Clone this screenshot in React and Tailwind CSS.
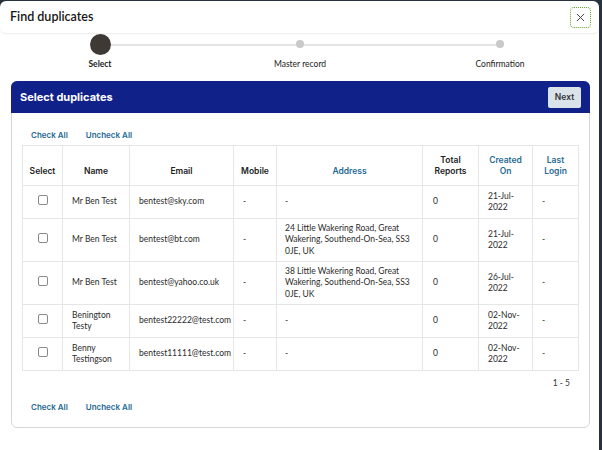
import React from 'react';

const rows = [
  { name: 'Mr Ben Test', email: 'bentest@sky.com', address: '-', created: '21-Jul-2022', h: 'h-[33px]' },
  {
    name: 'Mr Ben Test',
    email: 'bentest@bt.com',
    address: '24 Little Wakering Road, Great Wakering, Southend-On-Sea, SS3 0JE, UK',
    created: '21-Jul-2022',
    h: 'h-[43px]',
  },
  {
    name: 'Mr Ben Test',
    email: 'bentest@yahoo.co.uk',
    address: '38 Little Wakering Road, Great Wakering, Southend-On-Sea, SS3 0JE, UK',
    created: '26-Jul-2022',
    h: 'h-[43px]',
  },
  { name: 'Benington Testy', email: 'bentest22222@test.com', address: '-', created: '02-Nov-2022', h: 'h-[33px]' },
  { name: 'Benny Testingson', email: 'bentest11111@test.com', address: '-', created: '02-Nov-2022', h: 'h-[33px]' },
];

function CheckLinks() {
  return (
    <div className="flex gap-[18px] pl-[19px] text-[8px] font-semibold text-[#1f6a94]" style={{ fontFamily: 'Inter, sans-serif' }}>
      <button>Check All</button>
      <button>Uncheck All</button>
    </div>
  );
}

function Stepper() {
  return (
    <div className="relative h-[48px]">
      <div className="absolute left-[100px] right-[102px] top-[11px] h-[2px] bg-[#e4e4e4]" />
      <div className="relative grid grid-cols-3 w-[600px]">
        {['Select', 'Master record', 'Confirmation'].map((label, i) => (
          <div key={label} className="flex flex-col items-center">
            <div className="flex h-[22px] items-center justify-center">
              {i === 0 ? (
                <div className="h-[21px] w-[21px] rounded-full bg-[#3f3935]" />
              ) : (
                <div className="h-[8px] w-[8px] rounded-full bg-[#c9c9c9]" />
              )}
            </div>
            <div className={`mt-[3px] text-[8.5px] text-[#222] ${i === 0 ? 'font-bold' : ''}`}>{label}</div>
          </div>
        ))}
      </div>
    </div>
  );
}

export default function App() {
  return (
    <div className="h-[450px] w-[602px] overflow-hidden bg-[#26333f] pt-px" style={{ fontFamily: 'Lato, sans-serif' }}>
      <div className="h-[449px] w-[599px] rounded-t-md bg-white">
        {/* title bar */}
        <div className="flex h-[32px] items-center justify-between rounded-b-md pl-[10px] pr-[8px] shadow-[0_1px_2px_rgba(0,0,0,0.08)]">
          <h1 className="text-[12.5px] font-semibold text-[#161616]">Find duplicates</h1>
          <button className="flex h-[21px] w-[21px] items-center justify-center rounded-[4px] border border-dotted border-[#5fa12f] text-[#444]">
            <svg width="9" height="9" viewBox="0 0 10 10" stroke="currentColor" strokeWidth="1.1">
              <path d="M1 1L9 9M9 1L1 9" />
            </svg>
          </button>
        </div>

        <Stepper />

        {/* card */}
        <div className="ml-[11px] w-[579px] rounded-md border border-[#d6d6d6]" style={{ fontFamily: 'Inter, sans-serif' }}>
          <div className="-m-px flex h-[32px] items-center justify-between rounded-t-md bg-[#10218a] pl-[9px] pr-[9px]">
            <h2 className="text-[11px] font-bold text-white">Select duplicates</h2>
            <button className="h-[21px] w-[33px] rounded-[2px] bg-[#dbe3ea] text-[8.5px] font-semibold text-[#333]">Next</button>
          </div>

          <div className="pt-[17px]">
            <CheckLinks />
          </div>

          <div className="mt-[4px] px-[10px]">
            <table className="w-[556px] table-fixed border-collapse border border-[#e6e6e6] text-[8.5px] text-[#2b2b2b]">
              <colgroup>
                <col className="w-[40px]" />
                <col className="w-[67px]" />
                <col className="w-[104px]" />
                <col className="w-[43px]" />
                <col className="w-[146px]" />
                <col className="w-[56px]" />
                <col className="w-[54px]" />
                <col className="w-[46px]" />
              </colgroup>
              <thead>
                <tr className="h-[40px] text-center align-bottom text-[8.5px] font-semibold leading-[11px]">
                  <th className="border border-[#e6e6e6] pb-[8px] font-semibold text-[#222]">Select</th>
                  <th className="border border-[#e6e6e6] pb-[8px] font-semibold text-[#222]">Name</th>
                  <th className="border border-[#e6e6e6] pb-[8px] font-semibold text-[#222]">Email</th>
                  <th className="border border-[#e6e6e6] pb-[8px] font-semibold text-[#222]">Mobile</th>
                  <th className="border border-[#e6e6e6] pb-[8px] font-semibold text-[#1f6a94]">Address</th>
                  <th className="border border-[#e6e6e6] px-[8px] pb-[8px] font-semibold text-[#222]">Total Reports</th>
                  <th className="border border-[#e6e6e6] px-[8px] pb-[8px] font-semibold text-[#1f6a94]">Created On</th>
                  <th className="border border-[#e6e6e6] px-[6px] pb-[8px] font-semibold text-[#1f6a94]">Last Login</th>
                </tr>
              </thead>
              <tbody style={{ fontFamily: 'Lato, sans-serif' }}>
                {rows.map((r, i) => (
                  <tr key={i} className={`${r.h} align-middle leading-[11.5px]`}>
                    <td className="border border-[#e6e6e6] text-center">
                      <span className="mb-[4px] inline-block h-[10px] w-[10px] rounded-[2px] border border-[#8a8a8a] bg-white align-middle" />
                    </td>
                    <td className="border border-[#e6e6e6] pl-[9px] pr-[4px]">{r.name}</td>
                    <td className="border border-[#e6e6e6] pl-[9px]">{r.email}</td>
                    <td className="border border-[#e6e6e6] pl-[9px]">-</td>
                    <td className="border border-[#e6e6e6] pl-[8px] pr-[6px]">{r.address}</td>
                    <td className="border border-[#e6e6e6] pl-[10px]">0</td>
                    <td className="border border-[#e6e6e6] pl-[9px] pr-[8px]">{r.created}</td>
                    <td className="border border-[#e6e6e6] pl-[9px]">-</td>
                  </tr>
                ))}
              </tbody>
            </table>
            <div className="mt-[6px] pr-[9px] text-right text-[8.5px] text-[#333]" style={{ fontFamily: 'Lato, sans-serif' }}>
              1 - 5
            </div>
          </div>

          <div className="pb-[14px] pt-[11px]">
            <CheckLinks />
          </div>
        </div>
      </div>
    </div>
  );
}
